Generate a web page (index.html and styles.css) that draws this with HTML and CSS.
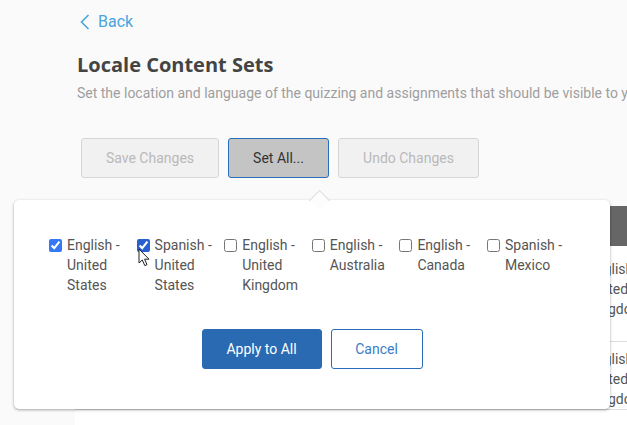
FILE: index.html
```html
<!DOCTYPE html>
<html>
<head>
<meta charset="utf-8">
<link rel="stylesheet" href="styles.css">
</head>
<body>
<div class="page">
  <a class="back" href="#">
    <svg class="chev" width="10" height="16" viewBox="0 0 10 16"><polyline points="8.5,1 1.5,8 8.5,15" fill="none" stroke="#4aa3df" stroke-width="1.6"/></svg>
    <span>Back</span>
  </a>
  <h1 class="title">Locale Content Sets</h1>
  <p class="subtitle">Set the location and language of the quizzing and assignments that should be visible to you when you use the app</p>
  <div class="actions">
    <button class="btn btn-disabled btn-save">Save Changes</button>
    <button class="btn btn-active btn-set">Set All...</button>
    <button class="btn btn-disabled btn-undo">Undo Changes</button>
  </div>
  <div class="table">
    <div class="thead"></div>
    <div class="row row-first">
      <div class="cell c1"></div>
      <div class="cell c2"></div>
      <div class="cell c3">English - United Kingdom</div>
    </div>
    <div class="row">
      <div class="cell c1"></div>
      <div class="cell c2"></div>
      <div class="cell c3">English - United Kingdom</div>
    </div>
  </div>
</div>

<div class="popover">
  <div class="arrow"></div>
  <div class="options">
    <label class="opt"><input type="checkbox" checked><span>English - United States</span></label>
    <label class="opt"><input type="checkbox" checked class="hover"><span>Spanish - United States</span></label>
    <label class="opt"><input type="checkbox"><span>English - United Kingdom</span></label>
    <label class="opt"><input type="checkbox"><span>English - Australia</span></label>
    <label class="opt"><input type="checkbox"><span>English - Canada</span></label>
    <label class="opt"><input type="checkbox"><span>Spanish - Mexico</span></label>
  </div>
  <div class="pop-actions">
    <button class="btn btn-primary">Apply to All</button>
    <button class="btn btn-outline">Cancel</button>
  </div>
  <svg class="cursor" width="13" height="19" viewBox="0 0 13 19"><path d="M1 1 L1 15 L4.3 12 L6.8 17.6 L9 16.6 L6.6 11.2 L11 11.2 Z" fill="#fff" stroke="#222" stroke-width="1" stroke-linejoin="round"/></svg>
</div>
</body>
</html>
```

FILE: styles.css
```css
html, body {
  margin: 0;
  padding: 0;
}
body {
  background: #fafafa;
  font-family: Roboto, "Liberation Sans", sans-serif;
  width: 627px;
  height: 425px;
  overflow: hidden;
  position: relative;
}
.page {
  display: flex;
  flex-direction: column;
}
.back {
  display: flex;
  align-items: center;
  gap: 8px;
  margin: 11px 0 0 80px;
  color: #4aa3df;
  text-decoration: none;
  font-size: 16px;
  line-height: 22px;
}
.chev {
  display: block;
}
.title {
  margin: 18px 0 0 77px;
  font-family: "Open Sans", sans-serif;
  font-weight: 700;
  font-size: 20px;
  line-height: 28px;
  color: #444;
}
.subtitle {
  margin: 4px 0 0 77px;
  font-size: 14px;
  line-height: 20px;
  color: #9e9e9e;
  white-space: nowrap;
  overflow: hidden;
}
.actions {
  display: flex;
  gap: 9px;
  margin: 35px 0 0 81px;
}
.btn {
  height: 40px;
  padding: 0;
  font-family: Roboto, "Liberation Sans", sans-serif;
  font-size: 14px;
  border-radius: 3px;
  box-sizing: border-box;
  cursor: pointer;
}
.btn-save {
  width: 138px;
}
.btn-set {
  width: 101px;
}
.btn-undo {
  width: 141px;
}
.btn-disabled {
  background: #f1f1f1;
  border: 1px solid #d6d6d6;
  color: #b9b9b9;
}
.btn-active {
  background: #c4c4c5;
  border: 1px solid #2a6ebb;
  color: #333;
}
.table {
  margin: 28px 0 0 75px;
  background: #fff;
  height: 220px;
}
.thead {
  height: 40px;
  background: #666;
}
.row {
  display: grid;
  grid-template-columns: 265px 248px 1fr;
  border-bottom: 1px solid #ddd;
}
.row-first {
  height: 95px;
}
.cell {
  border-left: 1px solid #ddd;
}
.cell.c1 {
  border-left: none;
}
.c3 {
  padding: 7px 4px 0 0;
  width: 60px;
  font-size: 14px;
  line-height: 20px;
  color: #555;
  border-left: none;
}
.row-first .c3 {
  padding-top: 13px;
}
.popover {
  position: absolute;
  left: 14px;
  top: 200px;
  width: 596px;
  height: 209px;
  background: #fff;
  border-radius: 5px;
  box-shadow: 0 1px 3px rgba(0,0,0,0.35);
  box-sizing: border-box;
  padding: 35px 0 0 35px;
}
.arrow {
  position: absolute;
  left: 298px;
  top: -7px;
  width: 14px;
  height: 14px;
  background: #fdfdfd;
  border-top: 1px solid #dcdcdc;
  border-left: 1px solid #dcdcdc;
  transform: rotate(45deg);
}
.options {
  display: grid;
  grid-template-columns: repeat(6, 87.6px);
}
.opt {
  display: flex;
  align-items: flex-start;
  font-size: 14px;
  line-height: 20px;
  color: #555;
}
.opt input {
  margin: 4px 5px 0 0;
  width: 13px;
  height: 13px;
  flex: none;
  accent-color: #3478f6;
}
.opt input.hover {
  accent-color: #2a5fcf;
}
.opt span {
  max-width: 64px;
}
.pop-actions {
  display: flex;
  justify-content: center;
  gap: 9px;
  margin: 34px 35px 0 0;
}
.btn-primary {
  background: #2a6ab3;
  border: 1px solid #2a6ab3;
  color: #fff;
  width: 120px;
}
.btn-outline {
  background: #fff;
  border: 1px solid #2a6ebb;
  color: #3b7cc4;
  width: 92px;
}
.cursor {
  position: absolute;
  left: 124px;
  top: 48px;
}
```
